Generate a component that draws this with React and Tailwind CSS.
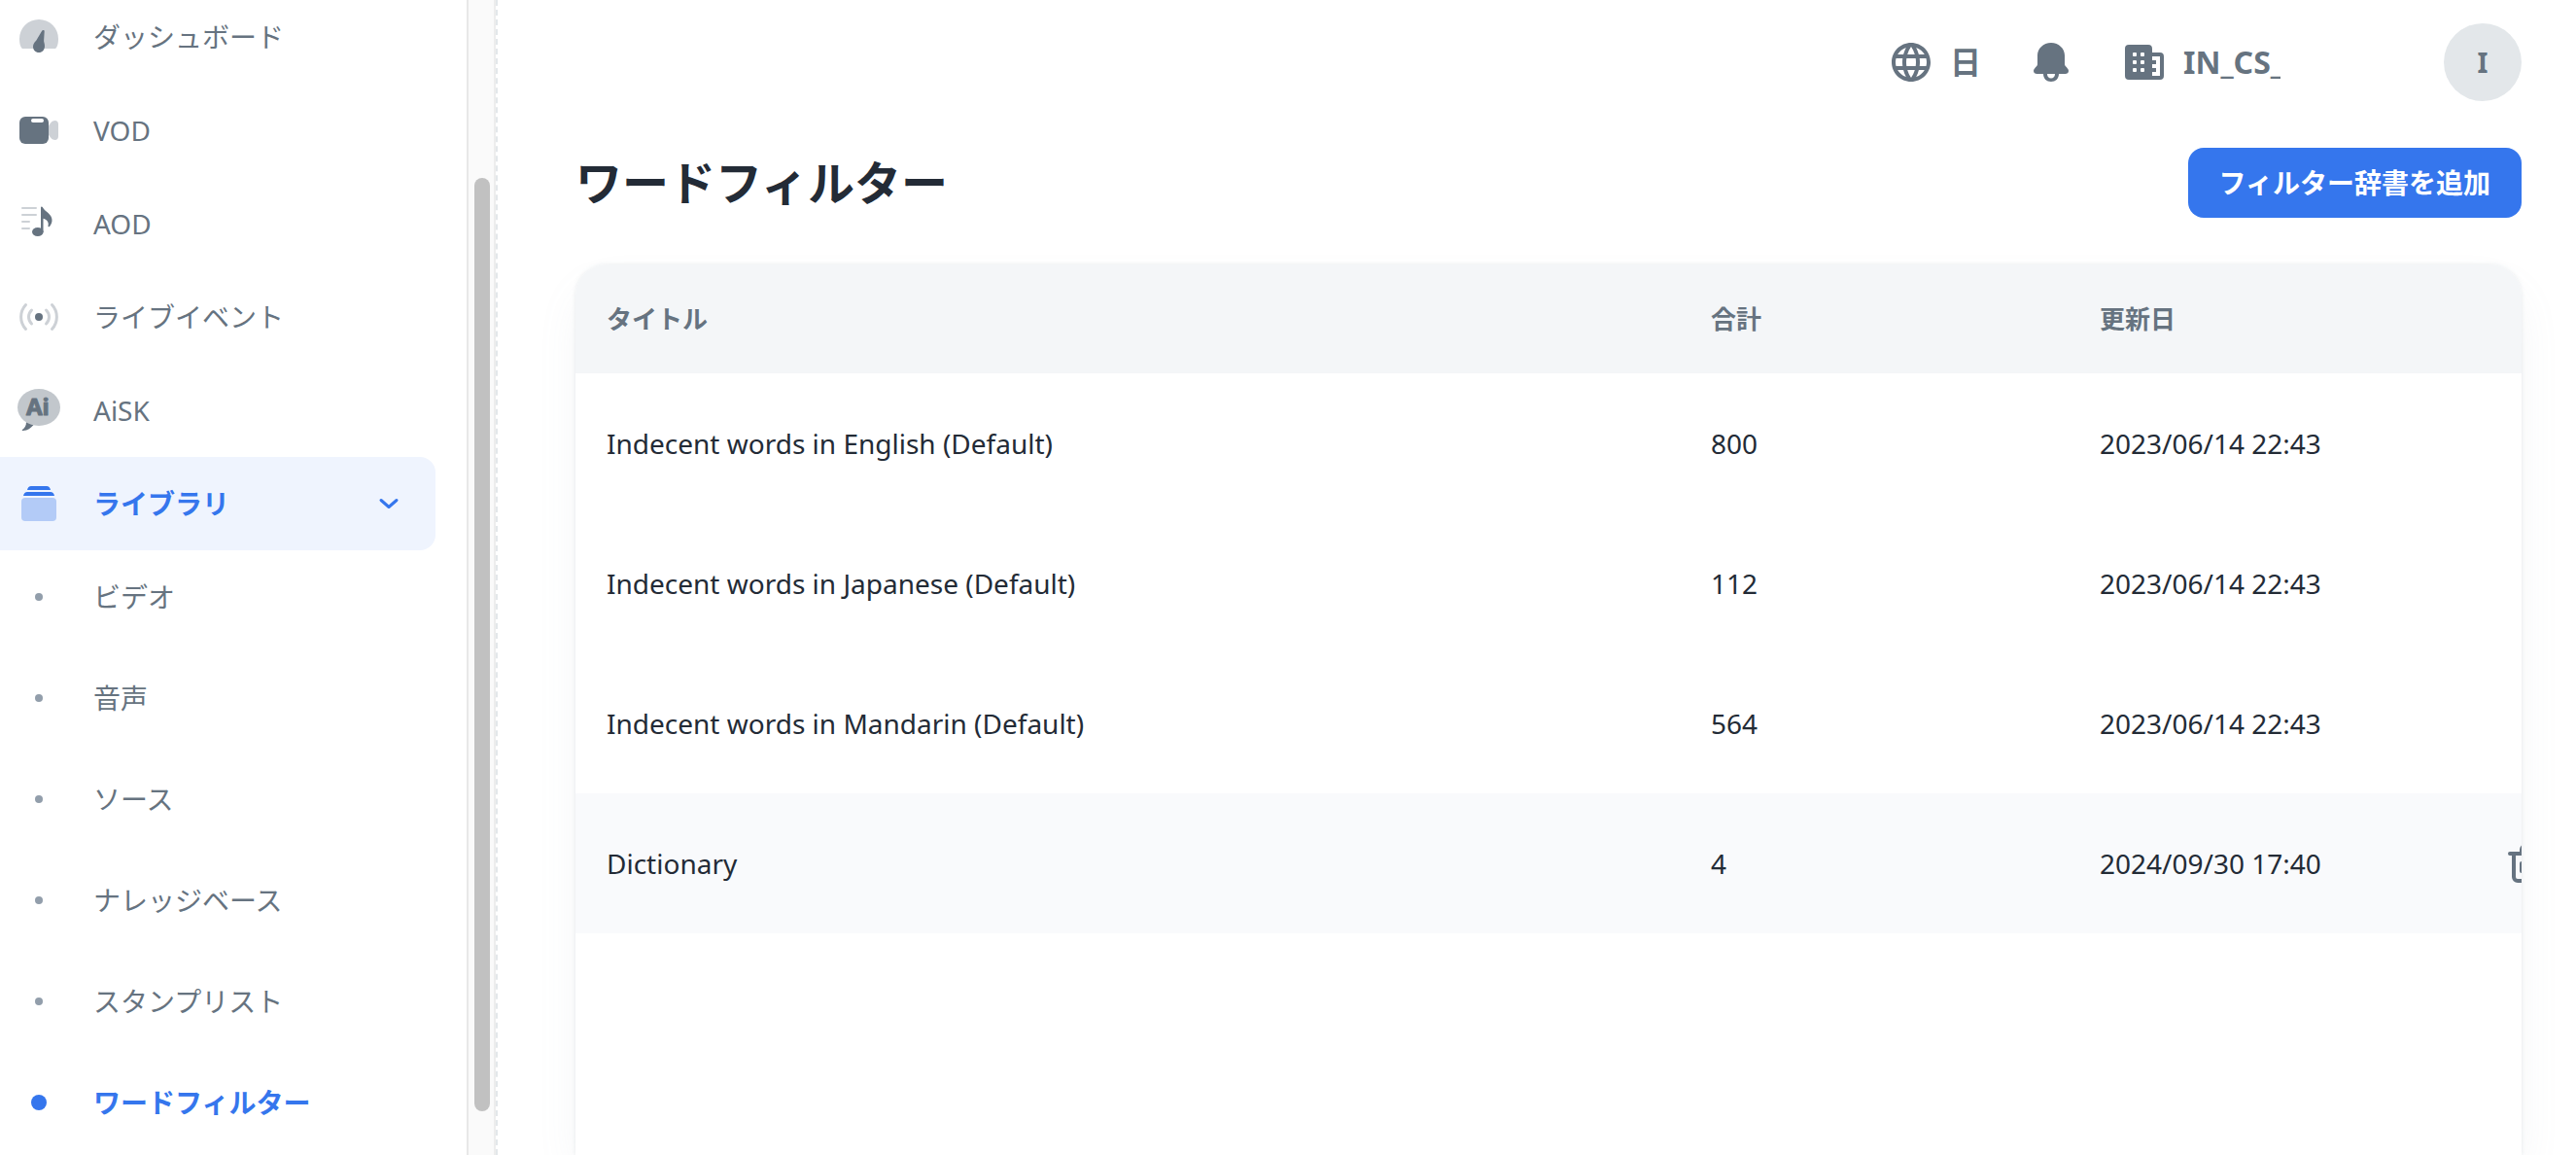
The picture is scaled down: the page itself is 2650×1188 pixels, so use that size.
import { MdLanguage } from 'react-icons/md'

const mainItems = [
  { label: 'ダッシュボード', icon: DashboardIcon },
  { label: 'VOD', icon: VodIcon },
  { label: 'AOD', icon: AodIcon },
  { label: 'ライブイベント', icon: LiveIcon },
  { label: 'AiSK', icon: AiskIcon },
]

const libraryItems = [
  { label: 'ビデオ' },
  { label: '音声' },
  { label: 'ソース' },
  { label: 'ナレッジベース' },
  { label: 'スタンプリスト' },
  { label: 'ワードフィルター', active: true },
]

const dictionaries = [
  { title: 'Indecent words in English (Default)', total: 800, updated: '2023/06/14 22:43' },
  { title: 'Indecent words in Japanese (Default)', total: 112, updated: '2023/06/14 22:43' },
  { title: 'Indecent words in Mandarin (Default)', total: 564, updated: '2023/06/14 22:43' },
  { title: 'Dictionary', total: 4, updated: '2024/09/30 17:40', removable: true },
]

function DashboardIcon() {
  return (
    <svg viewBox="0 0 48 48" className="w-12 h-12">
      <path fill="#cdd1d6" d="M24 6a20 20 0 0 1 20 20c0 4-.8 7-1.700 8.500-.6 1-1.300 1.500-2.300 1.500H8c-1 0-1.700-.5-2.300-1.500C4.800 33 4 30 4 26A20 20 0 0 1 24 6z" />
      <path fill="#667380" d="M28.500 17c.8 0 1.200.5 1.200 1.300l-.6 9.700c0 1.500.9 2.700.9 5.200 0 4-2.600 6.800-6 6.800s-6-2.600-6-6c0-1.900.8-3.300 1.600-4.500.9-1.300 1.900-1.900 2.500-3.300l4.900-8.200c.3-.7.800-1 1.500-1z" />
    </svg>
  )
}

function VodIcon() {
  return (
    <svg viewBox="0 0 48 48" className="w-12 h-12">
      <rect x="4" y="10" width="30" height="28" rx="6" fill="#667380" />
      <rect x="16" y="12" width="13" height="4" rx="2" fill="#fff" />
      <path fill="#cdd1d6" d="M34 19.500c1.500-2.500 3.500-5.500 6.500-5.500 2.200 0 3.500 1.500 3.500 4v12c0 2.500-1.300 4-3.500 4-3 0-5-3-6.500-5.500z" />
    </svg>
  )
}

function AodIcon() {
  return (
    <svg viewBox="0 0 48 48" className="w-12 h-12">
      <path stroke="#cdd1d6" strokeWidth="2" strokeLinecap="round" d="M7 8h14M7 15h14M7 22h7M7 29h7" />
      <ellipse cx="22.800" cy="32.500" rx="5.800" ry="4.500" fill="#667380" />
      <path fill="#667380" d="M26 7.500c0-1.200 1.300-1.300 1.900-.3 1.300 2.600 3.700 4 5.600 5.800 4.800 4.300 5.300 9 1.700 13.800-.8 1-2 .5-1.700-.6.9-3.200-.8-6.200-5-7.400V33H26z" />
    </svg>
  )
}

function LiveIcon() {
  return (
    <svg viewBox="0 0 48 48" className="w-12 h-12">
      <g fill="none" stroke="#cdd1d6" strokeWidth="3" strokeLinecap="round">
        <path d="M10.500 11.500c-6.500 7-6.500 18 0 25M16.500 17c-4 4-4 10 0 14M37.500 11.500c6.500 7 6.500 18 0 25M31.500 17c4 4 4 10 0 14" />
      </g>
      <circle cx="24" cy="24" r="4" fill="#667380" />
    </svg>
  )
}

function AiskIcon() {
  return (
    <svg viewBox="0 0 48 48" className="w-12 h-12">
      <path fill="#667380" d="M11 36c0 4-1.500 6-4 8-.6.600-.2 1.200.6 1.100 5-.4 8-2.600 11-6.100z" />
      <ellipse cx="24" cy="21" rx="22" ry="19" fill="#c2c7cc" />
      <text
        x="11"
        y="28.500"
        fontSize="24"
        fontWeight="700"
        fill="#667380"
        stroke="#667380"
        strokeWidth="1"
        strokeLinejoin="round"
      >
        Ai
      </text>
    </svg>
  )
}

function LibraryIcon() {
  return (
    <svg viewBox="0 0 48 48" className="w-12 h-12">
      <path fill="#3576ed" d="M16 6h16c2 0 3.500 1.500 4 4H12c.5-2.500 2-4 4-4z" />
      <path fill="#3576ed" d="M12 12h24c2 0 3.500 1.500 4 4H8c.5-2.500 2-4 4-4z" />
      <rect x="6" y="18" width="36" height="24" rx="4" fill="#b3cbf7" />
    </svg>
  )
}

function BellIcon() {
  return (
    <svg viewBox="0 0 48 48" className="w-12 h-12">
      <path fill="#667380" fillRule="evenodd" d="M24 4c8 0 14 6 14 13v9c0 2.500 4 4 4 7 0 2-1.500 3-3.500 3H32c0 5-3.500 8-8 8s-8-3-8-8H9.500C7.500 36 6 35 6 33c0-3 4-4.500 4-7v-9C10 10 16 4 24 4zM20 36c0 2.800 1.600 4.500 4 4.500s4-1.700 4-4.500z" />
    </svg>
  )
}

function CompanyIcon() {
  return (
    <svg viewBox="0 0 48 48" className="w-12 h-12">
      <path fill="#667380" fillRule="evenodd" d="M8 6h20c2.700 0 4 1.300 4 4v4h8c2.700 0 4 1.300 4 4v20c0 2.700-1.300 4-4 4H8c-2.700 0-4-1.300-4-4V10c0-2.700 1.300-4 4-4zM32 18v4h4v4h-4v4h4v4h-4v4h8V18z" />
      <g fill="#fff">
        <rect x="12" y="14" width="4" height="4" rx="1" />
        <rect x="20" y="14" width="4" height="4" rx="1" />
        <rect x="12" y="22" width="4" height="4" rx="1" />
        <rect x="20" y="22" width="4" height="4" rx="1" />
        <rect x="12" y="30" width="4" height="4" rx="1" />
        <rect x="20" y="30" width="4" height="4" rx="1" />
      </g>
    </svg>
  )
}

function TrashIcon() {
  return (
    <svg viewBox="0 0 48 48" className="w-12 h-12 shrink-0" fill="none" stroke="#667380" strokeWidth="4" strokeLinecap="round">
      <path d="M6 14h36M10 14v24a4 4 0 0 0 4 4h20a4 4 0 0 0 4-4V14M18 14v-4a4 4 0 0 1 4-4h4a4 4 0 0 1 4 4v4M18 24v8M30 24v8" />
    </svg>
  )
}

const Sidebar = () => (
  <aside className="flex shrink-0 h-full border-r-2 border-dashed border-[#e3e7ea]">
    <nav className="w-[480px] h-full overflow-hidden pr-8">
      <ul className="-mt-[10px]">
        {mainItems.map(({ label, icon: Icon }) => (
          <li key={label}>
            <a href="#" className="flex items-center h-24 pl-4 gap-8 text-[#667380]">
              <Icon />
              {label}
            </a>
          </li>
        ))}
        <li>
          <button className="flex items-center w-full h-24 pl-4 pr-8 gap-8 rounded-r-2xl bg-[#eff4fe] text-[#3576ed] font-bold">
            <LibraryIcon />
            <span className="flex-1 text-left">ライブラリ</span>
            <svg viewBox="0 0 32 32" className="w-8 h-8" fill="none" stroke="currentColor" strokeWidth="3" strokeLinecap="round" strokeLinejoin="round">
              <path d="M8 12.500l8 7 8-7" />
            </svg>
          </button>
          <ul className="flex flex-col gap-2">
            {libraryItems.map(({ label, active }) => (
              <li key={label}>
                <a
                  href="#"
                  className={`flex items-center h-24 pl-4 gap-8 ${active ? 'text-[#3576ed] font-bold' : 'text-[#667380]'}`}
                >
                  <span className="flex items-center justify-center w-12">
                    <span className={`rounded-full ${active ? 'w-4 h-4 bg-[#3576ed]' : 'w-2 h-2 bg-[#929eab]'}`} />
                  </span>
                  {label}
                </a>
              </li>
            ))}
          </ul>
        </li>
      </ul>
    </nav>

    {/* Scroll track */}
    <div className="w-[30px] h-full pt-[183px] pl-1.5 border-x-2 border-l-[#e8e8e8] border-r-[#ededed] bg-[#fafafa]">
      <div className="w-4 h-[960px] rounded-full bg-[#c1c1c1]" />
    </div>
  </aside>
)

const TopBar = () => (
  <header className="flex items-center justify-end gap-12 h-32 text-[32px] font-bold text-[#667380]">
    <button className="flex items-center gap-4" aria-label="言語">
      <MdLanguage className="w-12 h-12" />
      日
    </button>
    <button aria-label="通知">
      <BellIcon />
    </button>
    <button className="flex items-center gap-4">
      <CompanyIcon />
      <span className="w-[100px] overflow-hidden text-left">IN_CS_</span>
    </button>
    <button className="w-20 h-20 ml-[120px] rounded-full bg-[#e3e7ea] text-[28px]">I</button>
  </header>
)

const App = () => (
  <div className="flex h-screen overflow-hidden bg-white text-[28px] leading-[44px] text-[#232b36] font-['Noto_Sans','Noto_Sans_CJK_JP',sans-serif]">
    <Sidebar />
    <div className="flex flex-col flex-1 min-w-0 pl-20 pr-14">
      <TopBar />
      <div className="flex items-center justify-between h-[120px] mb-6">
        <h1 className="text-[48px] leading-[72px] font-bold">ワードフィルター</h1>
        <button className="h-[72px] px-8 rounded-2xl bg-[#3576ed] text-white font-bold">
          フィルター辞書を追加
        </button>
      </div>

      <main className="flex-1 overflow-hidden rounded-t-[32px] bg-white shadow-[0_0_4px_rgba(145,158,171,0.2),0_24px_48px_-8px_rgba(145,158,171,0.12)]">
        <table className="w-[2100px] table-fixed text-left">
          <thead>
            <tr className="h-28 bg-[#f4f6f8] text-[26px] text-[#667380]">
              <th className="w-[1136px] px-8 font-bold">タイトル</th>
              <th className="w-[400px] px-8 font-bold">合計</th>
              <th className="w-[400px] px-8 font-bold">更新日</th>
              <th />
            </tr>
          </thead>
          <tbody>
            {dictionaries.map((dictionary) => (
              <tr key={dictionary.title} className={`h-36 ${dictionary.removable ? 'bg-[#f9fafc]' : ''}`}>
                <td className="px-8">{dictionary.title}</td>
                <td className="px-8">{dictionary.total}</td>
                <td className="px-8">{dictionary.updated}</td>
                <td className="pl-12">
                  {dictionary.removable && (
                    <button className="block" aria-label="削除">
                      <TrashIcon />
                    </button>
                  )}
                </td>
              </tr>
            ))}
          </tbody>
        </table>
      </main>
    </div>
  </div>
)

export default App
